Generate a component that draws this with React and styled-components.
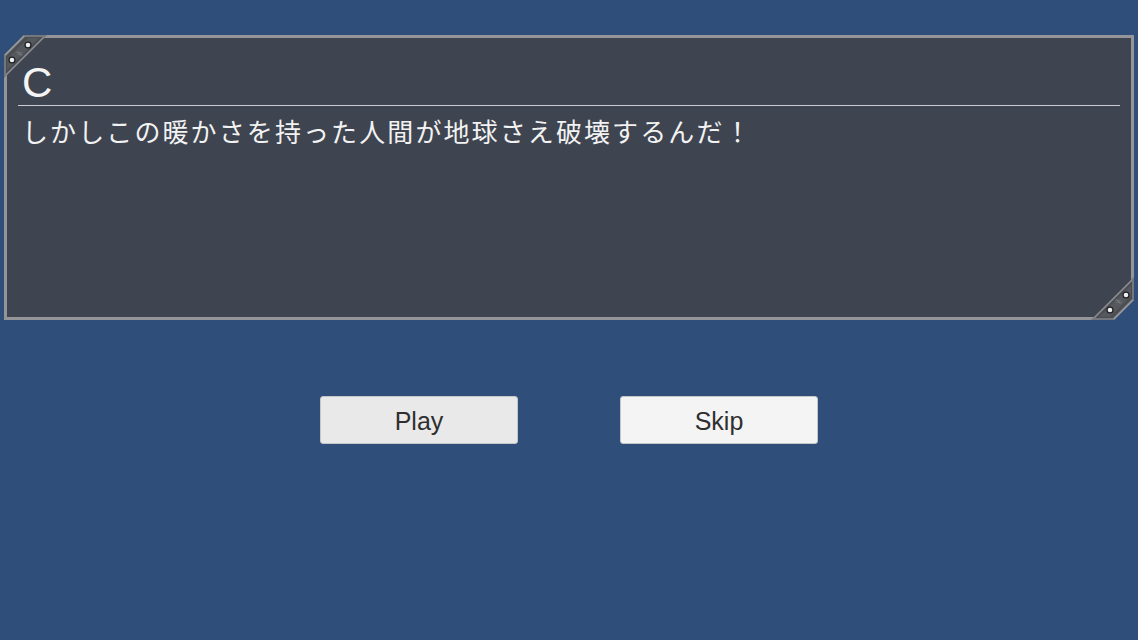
import React from 'react';
import styled, { createGlobalStyle } from 'styled-components';

const GlobalStyle = createGlobalStyle`
    html, body {
        margin: 0;
        padding: 0;
        background-color: #2f4e79;
    }

    body {
        width: 1138px;
        height: 640px;
        overflow: hidden;
        font-family: "Liberation Sans", Arial, sans-serif;
    }
`;

const CUT = 20;

const Screen = styled.div`
    display: flex;
    flex-direction: column;
    align-items: stretch;
    padding: 35px 4px 0 4px;
    height: 640px;
    box-sizing: border-box;
`;

const Frame = styled.div`
    position: relative;
    height: 285px;
    padding: 3px;
    box-sizing: border-box;
    background-color: #939598;
    clip-path: polygon(
        0 ${CUT}px, ${CUT}px 0, 100% 0,
        100% calc(100% - ${CUT}px), calc(100% - ${CUT}px) 100%, 0 100%
    );
`;

const Body = styled.div`
    height: 100%;
    padding: 0 11px;
    box-sizing: border-box;
    background-color: #3e4450;
    clip-path: polygon(
        0 ${CUT - 2}px, ${CUT - 2}px 0, 100% 0,
        100% calc(100% - ${CUT - 2}px), calc(100% - ${CUT - 2}px) 100%, 0 100%
    );
`;

const Speaker = styled.div`
    padding: 23px 0 0 4px;
    font-family: "Liberation Sans", Arial, sans-serif;
    font-size: 42px;
    line-height: 44px;
    color: #f4f4f4;
    border-bottom: 1px solid #c9cbce;
`;

const Message = styled.p`
    margin: 9px 0 0 0;
    padding-left: 4px;
    font-family: "Noto Sans CJK JP", "Noto Sans", sans-serif;
    font-size: 26px;
    line-height: 32px;
    letter-spacing: 2.1px;
    color: #f2f2f2;
`;

const Corner = styled.svg`
    position: absolute;
    width: 46px;
    height: 46px;
    ${(props) => props.flip
        ? 'right: 0; bottom: 0; transform: rotate(180deg);'
        : 'left: 0; top: 0;'}
`;

const ButtonRow = styled.div`
    display: flex;
    justify-content: center;
    gap: 102px;
    margin-top: 76px;
`;

const Button = styled.button`
    width: 198px;
    height: 48px;
    padding: 2px 0 0 0;
    border: 1px solid #c4c6c9;
    border-radius: 3px;
    background-color: ${(props) => props.light ? '#f4f4f4' : '#e9e9e9'};
    color: #2f2f2f;
    font-family: "Liberation Sans", Arial, sans-serif;
    font-size: 25px;
    cursor: pointer;
`;

const CornerPlate = ({ flip }) => (
    <Corner flip={flip ? 1 : 0} viewBox="0 0 46 46">
        <polygon points="0,19 19,0 43,0 0,43" fill="#74777b" />
        <polygon points="2,21 21,2 39,2 2,39" fill="#4a4d52" />
        <polygon points="3,24 24,3 35,3 3,35" fill="#55585d" />
        <line x1="1" y1="20" x2="20" y2="1" stroke="#9a9ca0" strokeWidth="1.4" />
        <line x1="2" y1="40" x2="40" y2="2" stroke="#8a8c90" strokeWidth="1.2" />
        <path d="M13.5 19.5 q1.3 -1.3 2.6 0 t2.6 0 M12.5 17.5 q1.3 -1.3 2.6 0 t2.6 0" stroke="#7e8186" strokeWidth="1" fill="none" />
        <circle cx="8" cy="25" r="3.6" fill="#1f2023" />
        <circle cx="24" cy="10" r="3.6" fill="#1f2023" />
        <circle cx="8" cy="25" r="2.3" fill="#f0f0f0" />
        <circle cx="24" cy="10" r="2.3" fill="#f0f0f0" />
    </Corner>
);

const App = () => {
    return (
        <>
            <GlobalStyle />
            <Screen>
                <Frame>
                    <Body>
                        <Speaker>C</Speaker>
                        <Message>しかしこの暖かさを持った人間が地球さえ破壊するんだ！</Message>
                    </Body>
                    <CornerPlate />
                    <CornerPlate flip />
                </Frame>
                <ButtonRow>
                    <Button>Play</Button>
                    <Button light>Skip</Button>
                </ButtonRow>
            </Screen>
        </>
    );
};

export default App;
